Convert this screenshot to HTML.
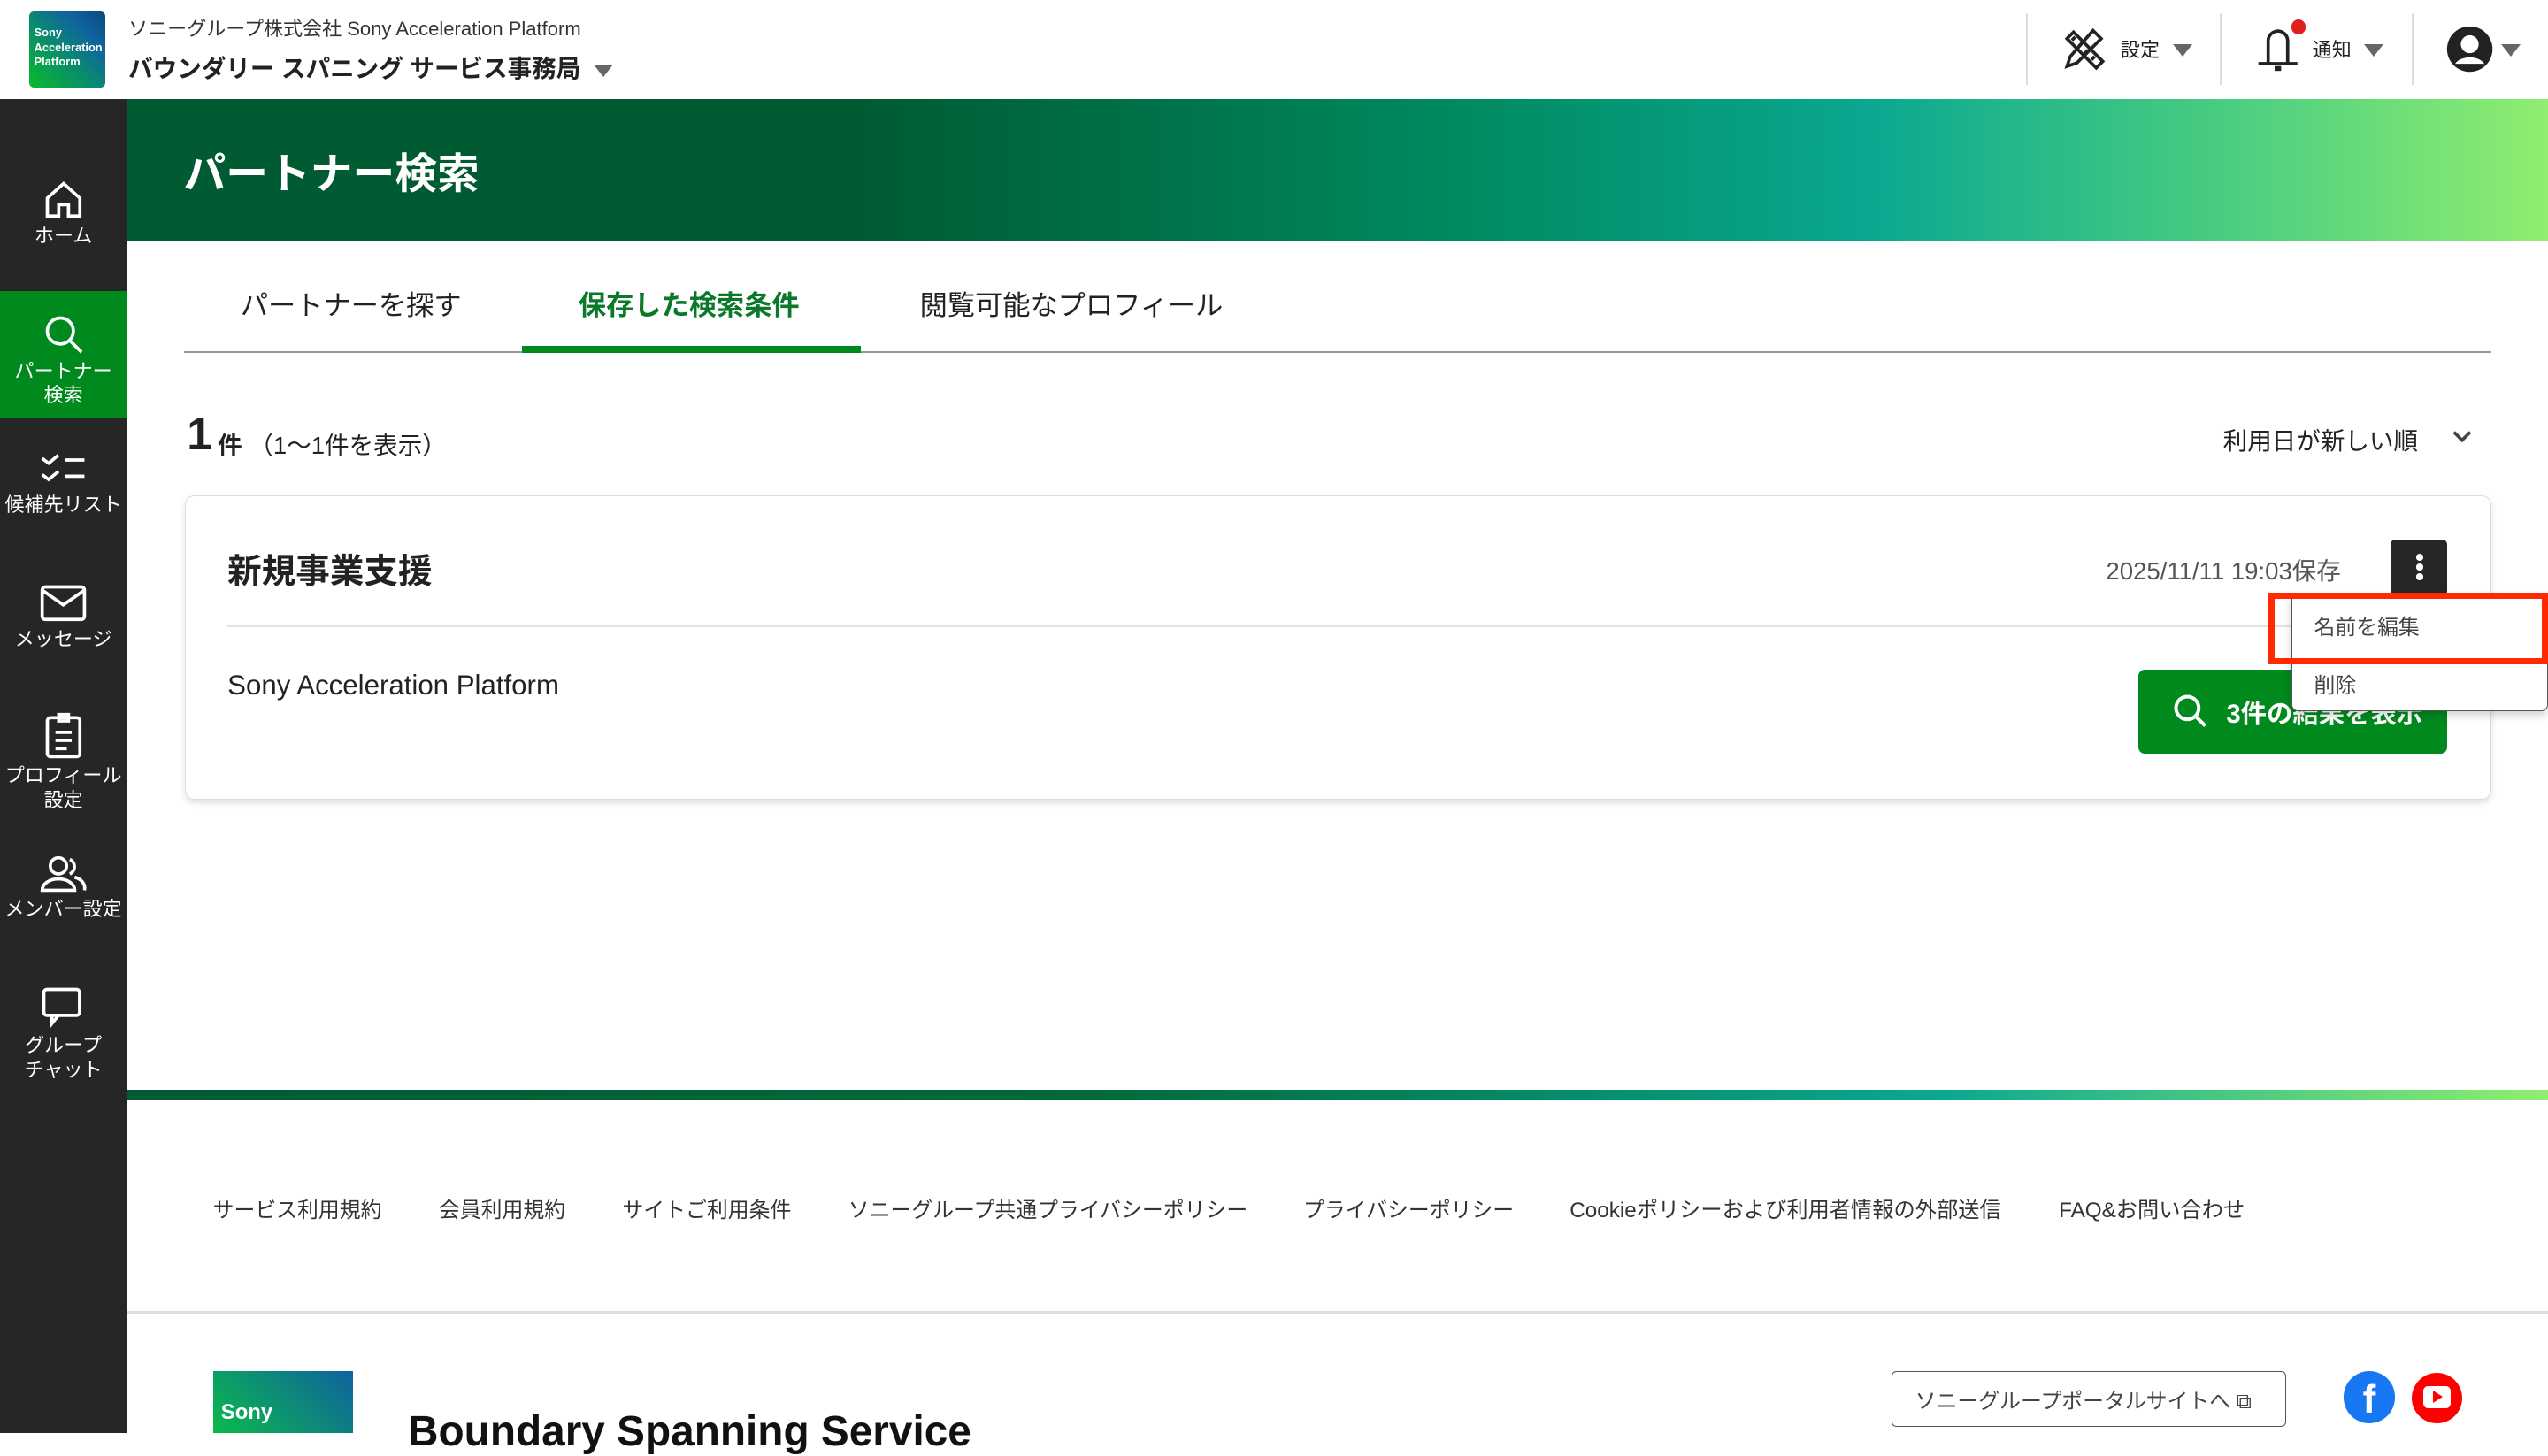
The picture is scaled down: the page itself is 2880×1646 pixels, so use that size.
<!DOCTYPE html>
<html><head><meta charset="utf-8"><style>
html{zoom:1.83673}
*{box-sizing:border-box;margin:0;padding:0}
body{width:1568px;height:882px;overflow:hidden;position:relative;background:#fff;font-family:"Liberation Sans","Noto Sans CJK JP",sans-serif;color:#222}
.a{position:absolute}
.side{left:0;top:61px;width:78px;height:821px;background:#262626}
.si{position:absolute;left:0;width:78px;text-align:center;color:#fff;font-size:12px;line-height:15px}
.si svg{display:block;margin:0 auto 2px}
.tri{display:inline-block;width:0;height:0;border-left:6px solid transparent;border-right:6px solid transparent;border-top:8px solid #666}
.div{top:8px;width:1px;height:44px;background:#ddd}
.flink{top:734px;font-size:13px;color:#333}
</style></head><body>
<!-- header -->
<div class="a" style="left:18px;top:7px;width:47px;height:47px;border-radius:3px;background:linear-gradient(45deg,#0aba2a 0%,#0a8a70 45%,#1062a0 75%,#0c4a7a 100%)"></div>
<div class="a" style="left:21px;top:16px;font-size:7px;line-height:9px;color:#fff;font-weight:bold">Sony<br>Acceleration<br>Platform</div>
<div class="a" style="left:79px;top:8px;font-size:12px;color:#333">ソニーグループ株式会社 Sony Acceleration Platform</div>
<div class="a" style="left:79px;top:30px;font-size:15px;font-weight:bold;color:#222">バウンダリー スパニング サービス事務局 <span class="tri" style="margin-left:4px;vertical-align:middle"></span></div>
<div class="a div" style="left:1247px"></div><div class="a div" style="left:1366px"></div><div class="a div" style="left:1484px"></div>
<svg class="a" style="left:1268px;top:16px" width="28" height="28" viewBox="0 0 28 28" fill="none" stroke="#222" stroke-width="2"><path d="M4 8l4-4 18 18-4 4z"/><path d="M7 9l2-2M11 13l2-2M15 17l2-2M19 21l2-2"/><path d="M20 3l5 5-15 15-6 2 2-6z"/></svg>
<div class="a" style="left:1305px;top:21px;font-size:12px">設定</div>
<span class="a tri" style="left:1337px;top:27px"></span>
<svg class="a" style="left:1388px;top:14px" width="28" height="32" viewBox="0 0 28 32" fill="none" stroke="#222" stroke-width="2"><path d="M8 25V11a6 6 0 0 1 12 0v14"/><path d="M2 25h24"/><path d="M12 28h4" stroke-width="3"/><path d="M14 4v1"/></svg>
<div class="a" style="left:1410px;top:12px;width:9px;height:9px;border-radius:50%;background:#e02020"></div>
<div class="a" style="left:1423px;top:21px;font-size:12px">通知</div>
<span class="a tri" style="left:1455px;top:27px"></span>
<svg class="a" style="left:1505px;top:15px" width="30" height="30" viewBox="0 0 30 30"><circle cx="15" cy="15" r="14" fill="#222"/><circle cx="15" cy="12" r="5.5" fill="#fff"/><path d="M6 24a10 7 0 0 1 18 0" fill="#fff"/></svg>
<span class="a tri" style="left:1539px;top:27px"></span>
<!-- banner -->
<div class="a" style="left:78px;top:61px;width:1490px;height:87px;background:linear-gradient(90deg,#005a32 0%,#005a32 30%,#008a60 55%,#0aa890 72%,#50d080 88%,#90ee70 100%)"></div>
<div class="a" style="left:113px;top:86px;font-size:26px;font-weight:bold;color:#fff">パートナー検索</div>
<!-- sidebar -->
<div class="a side"></div>
<div class="a" style="left:0;top:179px;width:78px;height:78px;background:#008a1e"></div>
<div class="si" style="top:110px"><svg width="26" height="26" viewBox="0 0 26 26" fill="none" stroke="#fff" stroke-width="2"><path d="M3 12L13 3l10 9v11h-7v-7h-6v7H3z"/></svg>ホーム</div>
<div class="si" style="top:193px"><svg width="26" height="26" viewBox="0 0 26 26" fill="none" stroke="#fff" stroke-width="2"><circle cx="11" cy="11" r="8"/><path d="M17 17l7 7"/></svg>パートナー<br>検索</div>
<div class="si" style="top:277px"><svg width="30" height="24" viewBox="0 0 30 24" fill="none" stroke="#fff" stroke-width="2"><path d="M2 5l4 3 6-5M2 15l4 3 6-5M16 6h12M16 16h12"/></svg>候補先リスト</div>
<div class="si" style="top:358px"><svg width="30" height="26" viewBox="0 0 30 26" fill="none" stroke="#fff" stroke-width="2"><rect x="2" y="3" width="26" height="20" rx="2"/><path d="M2 5l13 9 13-9"/></svg>メッセージ</div>
<div class="si" style="top:438px"><svg width="26" height="30" viewBox="0 0 26 30" fill="none" stroke="#fff" stroke-width="2"><rect x="3" y="4" width="20" height="24" rx="2"/><path d="M10 2h6v4h-6zM8 13h10M8 18h10M8 23h7"/></svg>プロフィール<br>設定</div>
<div class="si" style="top:526px"><svg width="30" height="24" viewBox="0 0 30 24" fill="none" stroke="#fff" stroke-width="2"><circle cx="12" cy="7" r="5"/><path d="M2 22a10 7 0 0 1 20 0zM19 3a5 5 0 0 1 0 9M22 14a9 7 0 0 1 6 8"/></svg>メンバー設定</div>
<div class="si" style="top:606px"><svg width="30" height="28" viewBox="0 0 30 28" fill="none" stroke="#fff" stroke-width="2"><rect x="3" y="3" width="22" height="16" rx="2"/><path d="M8 19v5l4-5"/></svg>グループ<br>チャット</div>
<!-- tabs -->
<div class="a" style="left:148px;top:174px;font-size:17px;color:#222">パートナーを探す</div>
<div class="a" style="left:356px;top:174px;font-size:17px;font-weight:bold;color:#0a7a2a">保存した検索条件</div>
<div class="a" style="left:566px;top:174px;font-size:17px;color:#222">閲覧可能なプロフィール</div>
<div class="a" style="left:113px;top:216px;width:1420px;height:1px;background:#999"></div>
<div class="a" style="left:321px;top:213px;width:209px;height:4px;background:#008a1e"></div>
<!-- count -->
<div class="a" style="left:115px;top:251px;font-size:28px;font-weight:bold;line-height:32px">1</div>
<div class="a" style="left:134px;top:262px;font-size:15px"><b>件</b> （1〜1件を表示）</div>
<div class="a" style="left:1368px;top:259px;font-size:15px">利用日が新しい順</div>
<svg class="a" style="left:1508px;top:263px" width="14" height="12" viewBox="0 0 14 12" fill="none" stroke="#444" stroke-width="2"><path d="M2 3l5 5 5-5"/></svg>
<!-- card -->
<div class="a" style="left:114px;top:305px;width:1419px;height:187px;border:1px solid #ddd;border-radius:6px;box-shadow:0 2px 4px rgba(0,0,0,.12)"></div>
<div class="a" style="left:140px;top:335px;font-size:21px;font-weight:bold">新規事業支援</div>
<div class="a" style="left:1296px;top:339px;font-size:15px;color:#555">2025/11/11 19:03保存</div>
<div class="a" style="left:1471px;top:332px;width:35px;height:35px;border-radius:3px;background:#262626"></div>
<div class="a" style="left:1487px;top:341px;width:4px;height:4px;border-radius:50%;background:#fff;box-shadow:0 6px 0 #fff,0 12px 0 #fff"></div>
<div class="a" style="left:140px;top:385px;width:1366px;height:1px;background:#e2e2e2"></div>
<div class="a" style="left:140px;top:412px;font-size:17px">Sony Acceleration Platform</div>
<div class="a" style="left:1316px;top:412px;width:190px;height:52px;border-radius:4px;background:#008a1e"></div>
<svg class="a" style="left:1336px;top:426px" width="24" height="24" viewBox="0 0 24 24" fill="none" stroke="#fff" stroke-width="2.2"><circle cx="10" cy="10" r="7"/><path d="M15 15l6 6"/></svg>
<div class="a" style="left:1370px;top:427px;font-size:16px;font-weight:bold;color:#fff">3件の結果を表示</div>
<!-- dropdown -->
<div class="a" style="left:1410px;top:367px;width:158px;height:71px;background:#fff;border:1px solid #555;border-top:none;border-radius:0 0 4px 4px;box-shadow:0 2px 6px rgba(0,0,0,.2)"></div>
<div class="a" style="left:1424px;top:375px;font-size:13px;color:#444">名前を編集</div>
<div class="a" style="left:1424px;top:411px;font-size:13px;color:#444">削除</div>
<div class="a" style="left:1396px;top:365px;width:172px;height:44px;border:4px solid #ff2a00"></div>
<!-- footer -->
<div class="a" style="left:78px;top:671px;width:1490px;height:6px;background:linear-gradient(90deg,#005a32 0%,#006a3a 40%,#0aa890 75%,#90ee70 100%)"></div>
<div class="a flink" style="left:131px">サービス利用規約</div>
<div class="a flink" style="left:270px">会員利用規約</div>
<div class="a flink" style="left:383px">サイトご利用条件</div>
<div class="a flink" style="left:522px">ソニーグループ共通プライバシーポリシー</div>
<div class="a flink" style="left:802px">プライバシーポリシー</div>
<div class="a flink" style="left:966px;font-size:13.2px">Cookieポリシーおよび利用者情報の外部送信</div>
<div class="a flink" style="left:1267px;font-size:13.2px">FAQ&amp;お問い合わせ</div>
<div class="a" style="left:78px;top:807px;width:1490px;height:2px;background:#ddd"></div>
<div class="a" style="left:131px;top:844px;width:86px;height:38px;background:linear-gradient(45deg,#0aba4a,#1062a0)"></div>
<div class="a" style="left:136px;top:862px;font-size:13px;font-weight:bold;color:#fff">Sony</div>
<div class="a" style="left:251px;top:866px;font-size:26px;font-weight:bold;color:#111;white-space:nowrap">Boundary Spanning Service</div>
<div class="a" style="left:1164px;top:844px;width:243px;height:34px;border:1px solid #555;border-radius:3px;font-size:13px;color:#444;padding:7px 0 0 14px">ソニーグループポータルサイトへ ⧉</div>
<div class="a" style="left:1442px;top:844px;width:32px;height:32px;border-radius:50%;background:#1877f2;color:#fff;font-weight:bold;font-size:24px;text-align:center;line-height:36px">f</div>
<div class="a" style="left:1484px;top:845px;width:31px;height:31px;border-radius:50%;background:#f00"></div>
<div class="a" style="left:1491px;top:853px;width:17px;height:14px;border-radius:3px;background:#fff"></div>
<div class="a" style="left:1497px;top:856px;width:0;height:0;border-top:4px solid transparent;border-bottom:4px solid transparent;border-left:6px solid #f00"></div>
</body></html>
